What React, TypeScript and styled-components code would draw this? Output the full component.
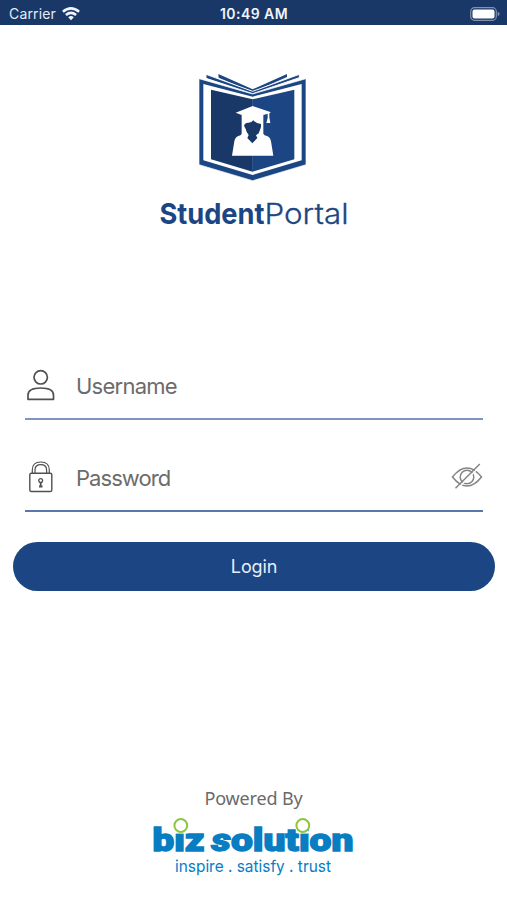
import React from 'react';
import styled, { createGlobalStyle } from 'styled-components';

const navy = '#193867';
const blue = '#1b4583';
const bizBlue = '#087dc2';

const Global = createGlobalStyle`
  * { box-sizing: border-box; }
  body { margin: 0; background: #fff; font-family: Inter, "Liberation Sans", sans-serif; }
`;
const Screen = styled.main`
  display: flex;
  flex-direction: column;
  align-items: center;
  width: 100%;
  height: 900px;
  background: #fff;
  overflow: hidden;
`;
const StatusBar = styled.header`
  display: grid;
  grid-template-columns: 1fr auto 1fr;
  align-items: center;
  flex: none;
  width: 100%;
  height: 25px;
  padding: 2px 7px 0 9px;
  background: ${navy};
  color: #e3ebf6;
  font-size: 14px;
`;
const Carrier = styled.div`
  display: flex;
  align-items: center;
  gap: 6px;
  letter-spacing: 0.15px;
`;
const Clock = styled.time`
  margin-right: 1px;
  font-weight: 600;
  letter-spacing: 0.45px;
  color: #f1f5fb;
`;
const BatteryIcon = styled.svg`
  display: block;
  justify-self: end;
`;
const BookArt = styled.svg`
  display: block;
  flex: none;
  margin: 47px 2px 0 0;
`;
const Wordmark = styled.svg`
  display: block;
  flex: none;
  margin: 13px 0 0 1px;
  font-family: Inter, sans-serif;
`;
const Form = styled.form`
  display: flex;
  flex-direction: column;
  width: 100%;
  padding: 0 12px 0 13px;
  margin-top: 120px;
`;
const Field = styled.label<{ $line: string }>`
  display: flex;
  align-items: center;
  height: 69px;
  margin: 0 12px 23px 12px;
  border-bottom: 2px solid ${p => p.$line};
`;
const FieldIcon = styled.svg`
  flex: none;
  width: 32px;
  height: 36px;
  margin-right: 19px;
  fill: none;
  stroke: #505050;
  stroke-width: 1.7;
  stroke-linejoin: round;
`;
const Input = styled.input<{ $tracking: number }>`
  flex: 1;
  min-width: 0;
  height: 36px;
  padding: 2px 0 0;
  border: 0;
  outline: 0;
  background: transparent;
  font: 400 22px Inter, sans-serif;
  letter-spacing: ${p => p.$tracking}px;
  color: #666;
  &::placeholder { color: #6c6c6c; opacity: 1; }
`;
const EyeIcon = styled.svg`
  flex: none;
  fill: none;
  stroke: #858585;
  stroke-width: 1.5;
`;
const LoginButton = styled.button`
  height: 49px;
  margin-top: 7px;
  padding: 0;
  border: 0;
  border-radius: 25px;
  background: ${blue};
  color: #e9eff8;
  font: 400 18px Inter, sans-serif;
  letter-spacing: -0.15px;
`;
const Footer = styled.footer`
  display: flex;
  flex-direction: column;
  align-items: center;
  margin-top: 195px;
`;
const Powered = styled.p`
  margin: 0;
  height: 29px;
  line-height: 25px;
  font-family: "Noto Sans", sans-serif;
  font-size: 18px;
  letter-spacing: -0.15px;
  color: #6a6a6a;
`;
const BizArt = styled.svg`
  display: block;
  font-family: Roboto, sans-serif;
`;

function BookLogo() {
  return (
    <BookArt width="107" height="110" viewBox="27 21 321 330" aria-label="Student Portal">
      <g fill={blue}>
        <path d="M85 27 188 73 291 27V36L188 81 86 38Z" />
        <path d="M48 28 188 79 328 28V38L188 86 48 40Z" stroke="#fff" strokeWidth="3" />
        <path d="M27 41 188 87 348 41V299L188 347 27 299Z" stroke="#fff" strokeWidth="2" />
      </g>
      <path d="M40 57 188 95 335 57V286L188 330 40 286Z" fill="#fff" />
      <path d="M63 74 188 103V320L63 283Z" fill={navy} />
      <path d="M187 103 313 74V283L187 320Z" fill={blue} />
      <path d="M188 123 241 141V144H238V157L241 174H229L233 158V146L220 150V206Q222 211 231 213Q240 216 243 229L250 272H126L133 229Q136 216 145 213Q155 211 155 204V150L137 143Z" fill="#fff" />
      <path d="M162 182Q165 172 176 173Q185 173 190 166Q198 175 213 177V186Q210 196 206 205L198 211 202 219 187 235 172 219 176 210Q169 202 167 192Z" fill={navy} />
    </BookArt>
  );
}

function BizLogo() {
  return (
    <BizArt width="207" height="66" viewBox="150 815 207 66">
      <g fill={bizBlue} stroke={bizBlue} strokeWidth="1.3" fontSize="31" fontWeight="900">
        <text x="152.5" y="851" textLength="52" lengthAdjust="spacingAndGlyphs">biz</text>
        <text x="211.5" y="851" textLength="142" lengthAdjust="spacingAndGlyphs">
          <tspan fontStyle="italic">s</tspan>olution
        </text>
      </g>
      <path d="M173 822H188V833.5H173ZM297.5 822H308V833.5H297.5Z" fill="#fff" />
      <g fill="#fff" stroke="#8cc63f" strokeWidth="2">
        <circle cx="180.8" cy="825.5" r="6.4" />
        <circle cx="302.8" cy="825.5" r="6.4" />
      </g>
      <text x="175" y="871.5" fill={bizBlue} fontFamily="Inter, sans-serif" fontSize="16.5" textLength="156" lengthAdjust="spacingAndGlyphs">inspire . satisfy . trust</text>
    </BizArt>
  );
}

export default function App() {
  return (
    <Screen>
      <Global />
      <StatusBar>
        <Carrier>
          Carrier
          <svg width="18" height="14" viewBox="0 0 18 14" fill="none" stroke="#f1f5fb" strokeWidth="2.5">
            <path d="M.9 4.8Q9-2 17.1 4.8M3.9 8Q9 3.8 14.1 8" />
            <path d="M6.2 10.2Q9 7.8 11.8 10.2L9 13.2Z" fill="#f1f5fb" stroke="none" />
          </svg>
        </Carrier>
        <Clock>10:49 AM</Clock>
        <BatteryIcon width="30" height="14" viewBox="0 0 30 14">
          <rect x=".7" y=".7" width="25.6" height="12.6" rx="3.8" fill="none" stroke="#8092b0" strokeWidth="1.2" />
          <rect x="2.5" y="2.5" width="22" height="9" rx="2" fill="#fff" />
          <path d="M27.7 4.8Q29.6 5.4 29.6 7T27.7 9.2Z" fill="#8092b0" />
        </BatteryIcon>
      </StatusBar>
      <BookLogo />
      <Wordmark width="195" height="36" viewBox="157 195 195 36" fill={blue}>
        <text x="159.5" y="223.7" fontSize="29" fontWeight="700" textLength="105" lengthAdjust="spacingAndGlyphs">Student</text>
        <text x="264.5" y="223.7" fontSize="29" fontWeight="300" textLength="84" lengthAdjust="spacingAndGlyphs" stroke={blue} strokeWidth="0.3">Portal</text>
      </Wordmark>
      <Form onSubmit={e => e.preventDefault()}>
        <Field $line="#7f95bf">
          <FieldIcon viewBox="25 367 32 36">
            <circle cx="40.7" cy="377.3" r="6.7" />
            <path d="M28 399.3V395C28 390.5 33 388 40.8 388S53.5 390.5 53.5 395V399.3Z" />
          </FieldIcon>
          <Input placeholder="Username" $tracking={-0.75} />
        </Field>
        <Field $line="#5a77ab">
          <FieldIcon viewBox="25 459 32 36">
            <rect x="29.8" y="473.2" width="22" height="18.3" rx="1.6" strokeWidth="1.4" />
            <path d="M32.3 473V470Q32.3 462 40.8 462T49.3 470V473M35 473V470Q35 464.7 40.8 464.7T46.6 470V473" strokeWidth="1.2" />
            <circle cx="40.7" cy="480.5" r="1.9" strokeWidth="1.3" />
            <path d="M40.7 482.5V486.5M39 486.5H42.5" strokeWidth="1.8" />
          </FieldIcon>
          <Input type="text" placeholder="Password" $tracking={-0.95} />
          <EyeIcon width="32" height="28" viewBox="451.5 464 32 28">
            <path d="M453 478Q460 469 467.5 469T482 478Q475 487 467.5 487T453 478Z" />
            <circle cx="467.5" cy="478" r="6.8" />
            <path d="M457.5 490.3 481.8 466" stroke="#fff" />
            <path d="M456 489.3 480.3 465" />
          </EyeIcon>
        </Field>
        <LoginButton>Login</LoginButton>
      </Form>
      <Footer>
        <Powered>Powered By</Powered>
        <BizLogo />
      </Footer>
    </Screen>
  );
}
